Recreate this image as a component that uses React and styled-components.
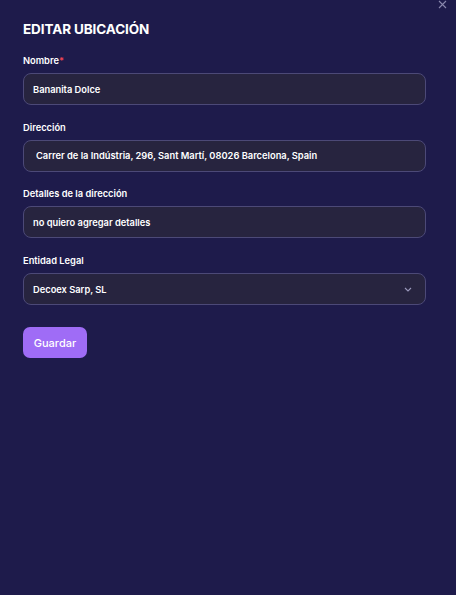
import React from "react";
import styled, { createGlobalStyle } from "styled-components";

const GlobalStyle = createGlobalStyle`
  html, body {
    margin: 0;
    padding: 0;
    background: #1e1b4b;
  }
  * {
    box-sizing: border-box;
  }
`;

const fields = [
  { label: "Nombre", required: true, value: "Bananita Dolce", inset: 9 },
  {
    label: "Dirección",
    value: "Carrer de la Indústria, 296, Sant Martí, 08026 Barcelona, Spain",
    inset: 12,
  },
  { label: "Detalles de la dirección", value: "no quiero agregar detalles", inset: 9 },
];

export default () => {
  return (
    <Page>
      <GlobalStyle />
      <CloseBtn aria-label="Cerrar">
        <svg width="9" height="9" viewBox="0 0 9 9">
          <path d="M1 1L8 8M8 1L1 8" stroke="#8a88ad" strokeWidth="1.1" />
        </svg>
      </CloseBtn>
      <Title>Editar ubicación</Title>
      <Form>
        {fields.map((f) => (
          <Field key={f.label}>
            <Label>
              {f.label}
              {f.required && <Required>*</Required>}
            </Label>
            <Input $inset={f.inset} defaultValue={f.value} />
          </Field>
        ))}
        <Field>
          <Label>Entidad Legal</Label>
          <Select>
            <span>Decoex Sarp, SL</span>
            <svg width="8" height="5" viewBox="0 0 8 5">
              <path
                d="M1 1L4 4L7 1"
                fill="none"
                stroke="#9a98bb"
                strokeWidth="1.1"
              />
            </svg>
          </Select>
        </Field>
      </Form>
      <SaveBtn>Guardar</SaveBtn>
    </Page>
  );
};

const Page = styled.div`
  position: relative;
  min-height: 595px;
  padding: 20px 30px 20px 23px;
  background: #1e1b4b;
  font-family: Inter, "Noto Sans", sans-serif;
  color: #ffffff;
`;

const CloseBtn = styled.button`
  position: absolute;
  top: 0;
  right: 9px;
  padding: 0;
  border: none;
  background: none;
  display: flex;
  cursor: pointer;
`;

const Title = styled.h2`
  margin: 0 0 17px;
  font-size: 13.5px;
  line-height: 18px;
  font-weight: 700;
  text-transform: uppercase;
  letter-spacing: -0.1px;
`;

const Form = styled.div`
  display: flex;
  flex-direction: column;
  gap: 16.7px;
`;

const Field = styled.div`
  display: flex;
  flex-direction: column;
  gap: 6px;
`;

const Label = styled.label`
  font-size: 9.3px;
  line-height: 12px;
  font-weight: 600;
  color: #ffffff;
`;

const Required = styled.span`
  color: #ef4452;
`;

const boxStyle = `
  width: 100%;
  height: 32px;
  border: 1px solid #4c4977;
  border-radius: 8px;
  background: #27243f;
  color: #ffffff;
  font-family: Inter, "Noto Sans", sans-serif;
  font-size: 9.3px;
  font-weight: 600;
`;

const Input = styled.input`
  ${boxStyle}
  padding: 0 0 0 ${(p) => p.$inset}px;
  outline: none;
`;

const Select = styled.div`
  ${boxStyle}
  display: flex;
  align-items: center;
  justify-content: space-between;
  padding: 0 13px 0 9px;

  & svg {
    margin-top: 1px;
  }
`;

const SaveBtn = styled.button`
  margin-top: 22px;
  width: 64px;
  height: 31px;
  border: none;
  border-radius: 7px;
  background: #9f6cf6;
  color: #ffffff;
  font-family: Inter, "Noto Sans", sans-serif;
  font-size: 11px;
  font-weight: 500;
  cursor: pointer;
`;
